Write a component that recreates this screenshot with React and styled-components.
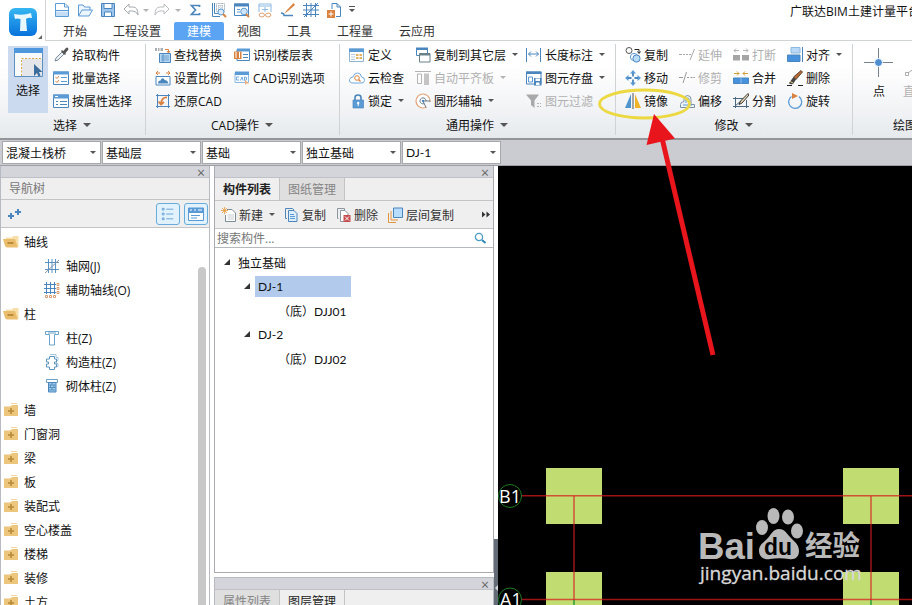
import React from 'react';
import styled, { createGlobalStyle } from 'styled-components';

const BLUE = '#4a86bd';
const SKY = '#5b9bd5';
const ORANGE = '#d9823f';
const GREY = '#b4b4b4';

// 16x16 drawings, looked up by name
const shapes = {
  doc: <><path d="M1.500 1.500h9.500L14.500 5v9.500h-13z" fill="#fff" stroke={SKY} /><path d="M10.500 1.500V5h4" fill="none" stroke={SKY} /><path d="M2 9.500h12V14H2z" fill="#c4ddf4" /><path d="M2 8.500h12" stroke={SKY} /></>,
  folder: <path d="M1.500 14V3H6l1.500 2H13v3M1.500 14L5 8h10.500L12 14z" fill="#edf5fd" stroke={SKY} />,
  save: <><path d="M1.500 1.500h13v13h-13z" fill="#9cc6ee" stroke={BLUE} /><path d="M4 1.500h8v5H4zM4.500 10h7v4.500h-7z" fill="#fff" stroke={BLUE} /></>,
  undo: <path d="M1 7l5-5v3h4q5 0 5 8-2-4-5-4H6v3z" fill="#fff" stroke="#a5a9ae" />,
  redo: <path d="M15 7l-5-5v3H6q-5 0-5 8 2-4 5-4h4v3z" fill="#fff" stroke="#b9bcc0" />,
  sigma: <path d="M12.500 5V3.500H4.500L8.500 8l-4 4.500h8V11" fill="none" stroke={BLUE} strokeWidth="1.700" />,
  gridSearch: <><path d="M5.500 1.500h8v8h-8zM8 1v9M11 1v9M5 4h9M5 7h9" fill="none" stroke="#9aa9b7" strokeDasharray="1 1" /><path d="M1.500 1v13.500H9M3.500 1v10.500H8" fill="none" stroke={BLUE} /><circle cx="10" cy="10" r="3" fill="#d8ebfb" stroke={SKY} /><path d="M12 12l3 3" stroke={ORANGE} strokeWidth="2" /></>,
  winSearch: <><path d="M.5 2h14v11.500H.5z" fill="#fff" stroke={BLUE} /><path d="M0 1.500h15v3H0z" fill={BLUE} /><path d="M3 7.500h3M3 10h3" stroke={SKY} /><circle cx="10" cy="9.500" r="3.300" fill="#cfe6fa" stroke={SKY} /><path d="M12 12l3 3" stroke={ORANGE} strokeWidth="2" /></>,
  glasses: <><path d="M2 10V2h12v8M2 4h12M5 7.500h6M8 5v5" fill="none" stroke="#8db9e2" /><ellipse cx="4.800" cy="13" rx="2.700" ry="1.900" fill="#fff" stroke="#e0a06f" /><ellipse cx="11.200" cy="13" rx="2.700" ry="1.900" fill="#fff" stroke="#e0a06f" /></>,
  pen: <><path d="M13.500 1L7 8l-3 4 4-3 7-6z" fill={ORANGE} /><path d="M1 11q3 0 3 2.500h9" fill="none" stroke={BLUE} strokeWidth="1.400" /></>,
  mesh: <path d="M3.500 1v14M8 1v14M12.500 1v14M0 3.500h16M0 8h16M0 12.500h16M1 15L15 1" fill="none" stroke={BLUE} />,
  docPlus: <><path d="M6 7V1.500h5L14.500 5v9.500H10M11 1.500V5h3.500" fill="none" stroke={BLUE} /><path d="M1 8h8v8H1z" fill={ORANGE} /><path d="M5 9.500v5M2.500 12h5" stroke="#fff" /></>,
  picker: <><path d="M2 14l1-3 6-6 2 2-6 6z" fill="#eaf2f8" stroke="#7c8a96" /><path d="M8.500 3.500l4 4" stroke="#555" strokeWidth="1.600" /><path d="M11 5.500l3-3.500" stroke="#555" strokeWidth="2.800" strokeLinecap="round" /></>,
  listCheck: <><path d="M.5 2h15v12.500H.5z" fill="#fff" stroke={BLUE} /><path d="M0 1.500h16V4.500H0z" fill={SKY} /><path d="M2.500 7l1.500 1.500L6 6M2.500 11l1.500 1.500L6 10" fill="none" stroke={ORANGE} /><path d="M8 7.500h6M8 11.500h6" stroke={SKY} /></>,
  listProp: <><path d="M.5 2h15v12.500H.5z" fill="#fff" stroke={BLUE} /><path d="M0 1.500h16V5.500H0z" fill={SKY} /><path d="M2 3.500h3" stroke="#fff" /><path d="M3 8.500h2M3 11.500h2M7 8.500h7M7 11.500h7" stroke={BLUE} /></>,
  replace: <><path d="M0 1h8v3H0z" fill="#a9aeb2" /><path d="M2.500 1v3M5 1v3" stroke="#fff" /><path d="M10 2.500h3.500V5M12 4l1.500 2L15 4" fill="none" stroke={ORANGE} /><path d="M4.500 6.500h11v9h-11z" fill="#b9d8f3" stroke={BLUE} /><path d="M6 9h8M6 11h8M6 13h8M8 7v8" stroke={BLUE} strokeWidth=".7" /></>,
  scale: <><path d="M1 3h4M3 1L1 3l2 2M15 3h-4M13 1l2 2-2 2" stroke={ORANGE} fill="none" /><path d="M1 6.500h14v8.500H1z" fill="#fff" stroke={BLUE} /><path d="M3 13.500q0-3 2.500-3 1-3 3-2 1 2 3 2 1.500 1 2 3z" fill={BLUE} /></>,
  restore: <><path d="M2.500 1v14M13.500 1v14M1 2.500h14M1 13.500h14" fill="none" stroke={BLUE} /><path d="M12 4.500Q6.500 4 6 11M3.500 8.500L6 11.500l3-2.500" fill="none" stroke={ORANGE} strokeWidth="1.800" /></>,
  floorTable: <><path d="M3 2.500h12.500v11H3z" fill="#fff" stroke={BLUE} /><path d="M3 1.500h13v3H3z" fill={SKY} /><path d="M0 4.500h7.500V12H0z" fill={ORANGE} /><path d="M2 5v6M5.500 5v6" stroke="#fff" fill="none" /><path d="M9 7.500h5M9 10.500h5" stroke={BLUE} /></>,
  cadOption: <><path d="M1 2.500h13.500v10H1z" fill="#f5faff" stroke="#8db9e2" /><path d="M1 1.500h14v3.500H1z" fill={SKY} /><path d="M5 7H2.500v3H5M6.500 10.500L8 7l1 3.500M10.500 7v3.500q3 0 2-3z" stroke={SKY} fill="none" strokeWidth=".8" /><path d="M11 10v5l1.500-1.500H15z" fill="#f0ae7c" /></>,
  define: <><path d="M.5 2h14v12.500H.5z" fill="#fff" stroke="#8fb3d3" /><path d="M0 1.500h15V5H0z" fill={SKY} /><path d="M2 7.500h4M2 10h4M2 12.500h4" stroke="#b4cbdf" /><path d="M7 7h6v5H7z" fill="#e6b160" /><path d="M7 9.500h6M10 7v5" stroke="#fff" /></>,
  cloud: <><path d="M4 13q-4 0-3.500-3.500Q1.500 7 4 7q1-4 4.500-4T12.500 7q3.500.500 3 3.500T12 13z" fill="#fff" stroke="#6caae2" /><circle cx="8" cy="8" r="2.300" fill="none" stroke={ORANGE} /><path d="M9.500 9.500l2 2" stroke={ORANGE} strokeWidth="1.300" /></>,
  lock: <><path d="M6 7V4.500Q6 2 9 2t3 2.500V7" fill="none" stroke={BLUE} strokeWidth="1.600" /><path d="M4 7h10.500v8H4z" fill={SKY} stroke={BLUE} strokeWidth=".7" /><circle cx="9.200" cy="10" r="1.200" fill="#fff" /><path d="M9.200 10v3" stroke="#fff" /></>,
  copyFloor: <><path d="M1.500 1.500h11v7h-11z" fill="#fff" stroke={BLUE} /><path d="M1 .5h12V3H1z" fill={BLUE} /><path d="M4.500 6.500H15v8.500H4.500z" fill="#fff" stroke="#68808a" /><path d="M4.500 7.500H15" stroke="#68808a" strokeWidth="2" /></>,
  alignSlab: <><path d="M0 1.500h16" stroke={GREY} /><path d="M2.500 4v9.500h4V4z" fill="none" stroke={GREY} /><path d="M9 3.500h5V15H9z" fill="#c4c4c4" /></>,
  circleAxis: <><circle cx="8" cy="8" r="7" fill="#fff" stroke="#e4a275" strokeWidth="1.200" /><path d="M9 9h7v6h-4z" fill="#f4f6f8" /><path d="M11 8a3 3 0 1 0-2 2.700M8 8h7.500M8 8l3 6.500" fill="none" stroke="#64798a" /><circle cx="8" cy="8" r="1.200" fill={BLUE} /></>,
  length: <path d="M.5 1v14M14.500 1v14M2.500 7h10M5 4.500L2.500 7 5 9.500M10 4.500L12.500 7 10 9.500" fill="none" stroke={BLUE} />,
  storage: <><path d="M.5 2h14.500v12H.5z" fill="#fff" stroke={BLUE} /><path d="M0 1.500h15.500V4H0z" fill={BLUE} /><path d="M2.500 7h4v5h-4z" fill="#fff" stroke={SKY} /><path d="M8 8h7.500v7.500H8z" fill={BLUE} /><path d="M9.500 8.500h4.500V11H9.500zM10 12.500h3.500V15H10z" fill="#fff" /></>,
  filter: <><path d="M0 1.500h13L8.500 7.500V15L5 12V7.500z" fill="#a9a9a9" /><path d="M11 10.500h4M11 13.500h4" stroke={GREY} strokeDasharray="2 1" /></>,
  copy2: <><circle cx="4" cy="3.500" r="3" fill="#fff" stroke="#555" /><path d="M9.500 2.500H14V6M12.500 4.500L14 6.500 15.500 4.500" fill="none" stroke="#222" /><circle cx="9" cy="10" r="3.600" fill="#fff" stroke={SKY} /><circle cx="11.500" cy="11.500" r="3.600" fill="#b9dcf8" stroke={BLUE} /></>,
  move: <><path d="M8 0l3 3.500H5zM8 16l3-3.500H5zM0 8l3.500-3v6zM16 8l-3.500-3v6z" fill={SKY} /><path d="M8 3v3.500M8 9.500V13M3 8h3.500M9.500 8H13" stroke={BLUE} strokeWidth="1.800" /></>,
  mirror: <><path d="M6 1v14H0z" fill="#4e94cd" /><path d="M10 1v14h6z" fill="#f0b429" /><path d="M8 0v16" stroke="#555" /></>,
  extend: <path d="M0 7.500h3M4 7.500h2M7 7.500h2M10 7.500h2M15.500 2L11 13" fill="none" stroke="#aaa" />,
  trim: <path d="M0 7.500h4M8 7.500h2M11.500 7.500h2M14.500 7.500H16M7.500 2L4 13" fill="none" stroke="#999" />,
  offset: <><path d="M1.500 14.500h14v-3H12V6.500q0-4-3.500-4T5 6.500v2q-3.500.500-3.500 3z" fill="#eef3f7" stroke="#7d93a5" /><path d="M4 12h9M7 10V6.500Q7 5 8.500 5T10 6.500V10" fill="none" stroke={SKY} /></>,
  breakUp: <><path d="M1 3.500h5M3 1.500l-2 2 2 2M15 3.500h-5M13 1.500l2 2-2 2" fill="none" stroke={GREY} /><path d="M0 8h7v5.500H0zM9 8h7v5.500H9z" fill="#a5a5a5" /></>,
  merge: <><path d="M1 3.500h5M4 1.500l2 2-2 2M15 3.500h-5M12 1.500l-2 2 2 2" fill="none" stroke="#d39b35" /><path d="M.5 8h15v5.500H.5z" fill="#4792dd" stroke={BLUE} /><path d="M8 8v5.500" stroke="#8fbdea" /></>,
  split: <><path d="M0 5.500h10M0 13.500h16M2.500 4v11M13.500 7v8M2 13L14 3" fill="none" stroke="#4a6780" /><path d="M15 .5l1 1.500-7 8-3 1.500L7.500 8z" fill="#e8d9b5" stroke="#222" strokeWidth=".9" /></>,
  align: <><path d="M4 .5h9v5.500H4z" fill="#b8d8f6" stroke="#8ab8df" /><path d="M.5 8h12.500v6.500H.5z" fill="#4792dd" stroke={BLUE} /><path d="M15.500 0v15" stroke={BLUE} /></>,
  erase: <><path d="M0 15.500h5M11 15.500h5" stroke="#222" /><path d="M14 .5L15.500 2 9 9.500 6.500 7z" fill="#b86a35" stroke="#432" strokeWidth=".8" /><path d="M6.500 7L9 9.500 6 14q-3 1-4-1z" fill="#434343" /><path d="M3 11.500l3 1.500" stroke="#f0cf81" /></>,
  rotate: <><path d="M4.500 3.500A6.500 6.500 0 1 0 12 3.600" fill="none" stroke={SKY} strokeWidth="1.300" /><path d="M5 0l6 3-6 3z" fill={ORANGE} /></>,
  newDoc: <><path d="M6 2.500h5L14.500 6v8.500h-10V8" fill="#fff" stroke="#7e8c96" /><path d="M6.500 8H13M6.500 10H13M6.500 12H13" stroke="#c8ced3" /><path d="M1 1l5 5M6 1L1 6M3.500 0v7M0 3.500h7" stroke="#e99b3b" strokeWidth=".8" /></>,
  pages: <><path d="M3 11.500H1.500v-10h7L10 3" fill="none" stroke={BLUE} /><path d="M4.500 3.500H10L13 6.500v8H4.500z" fill="#dceefb" stroke={BLUE} /><path d="M6 7.500h4M6 9.500h5M6 11.500h5" stroke={SKY} /></>,
  pagesDel: <><path d="M2.500 11.500h-1v-10h7V3" fill="none" stroke="#8b969e" /><path d="M4.500 3.500H9l3 3v8H4.500z" fill="#fff" stroke="#8b969e" /><path d="M7.500 8h7v7h-7z" fill="#c64b4b" /><path d="M9 9.500l4 4M13 9.500l-4 4" stroke="#fff" /></>,
  floorCopy: <><path d="M.5 6v9.500H8M3 4v9h7" fill="none" stroke="#e3953e" /><path d="M5.500 1h9v9.500h-9z" fill="#b8dcfb" stroke={BLUE} /></>,
  axisGrid: <><path d="M4.500 1v14M8 1v14M11.500 1v14M1 4.500h14M1 11.500h14" stroke={BLUE} strokeWidth=".9" /><path d="M1 15L15 2" stroke="#8395a5" /></>,
  axisAux: <><path d="M2.500 0v12M6.500 0v12M10.500 0v12M0 2.500h12M0 6.500h12M0 10.500h12" stroke={BLUE} /><path d="M13 1.500h2v2h-2zM13 5.500h2v2h-2zM13 9.500h2v2h-2zM1.500 13.500h2v2h-2zM5.500 13.500h2v2h-2zM9.500 13.500h2v2h-2z" fill="#fff" stroke="#d59366" strokeWidth=".9" /></>,
  column: <path d="M1.500 1.500h13v3H10.500V15H5.500V4.500h-4zM4 3h8" fill="#fff" stroke="#6ba3ca" />,
  tieColumn: <><path d="M6 .5h6v3h2v3h-1.500v3H14v3h-3" fill="none" stroke="#a3c6dd" /><path d="M5.500 2.500h5V5h2v3h-2v2h2v3h-2v2.500h-5V13h-3v-3h2V8h-2V5h3z" fill="#fff" stroke="#5b94bd" /></>,
  brickColumn: <><path d="M2.500 1.500h11v3h-11z" fill="#fff" stroke="#6ba3ca" /><path d="M4.500 4.500h7.500v9.500H4.500z" fill="#9cc9ec" stroke={BLUE} /><path d="M4.500 7h7M4.500 9.500h7M4.500 12h7M8 4.500V7M6.500 7v2.500M10 7v2.500M8 9.500V12" stroke="#4886b5" strokeWidth=".8" /></>,
  folderOpen: <><path d="M3 3.500h6L10 2h5.500v11H4z" fill="#f7dfa9" /><path d="M0 5h12l3 8.500H4.500q-2.500 0-3-3.500z" fill="#e9bd6c" /><path d="M4.500 9h6" stroke="#a8762c" strokeWidth="1.400" /></>,
  folderClosed: <><path d="M1 4.500h6L9 3h6v11H1z" fill="#ecc67c" /><path d="M8 1.500h6" stroke="#f1d79b" /><path d="M5 9h6M8 6v6" stroke="#b78835" strokeWidth="1.500" /></>,
  plusPlus: <path d="M1 10h6M4 7v6M8 6h6M11 3v6" stroke={BLUE} strokeWidth="2" />,
  viewList: <><path d="M1.500 1.500h2v2h-2zM1.500 7h2v2h-2zM1.500 12.500h2v2h-2z" fill="none" stroke={SKY} /><path d="M6 2.500h8M6 8h8M6 13.500h8" stroke={SKY} /></>,
  viewCard: <><path d="M.5 2h15v12.500H.5z" fill="#fff" stroke={SKY} /><path d="M0 2h16v5H0z" fill={SKY} /><path d="M2 4h2M6 4h2M10 4h4" stroke="#fff" /><path d="M3 9.500h9M3 12h6" stroke={SKY} /></>,
  search: <><circle cx="6" cy="7" r="3.600" fill="none" stroke="#4b9cc4" strokeWidth="1.300" /><path d="M9 10l3.500 3" stroke="#2e86b4" strokeWidth="2" /></>,
};

const Icon = ({ name, size = 16 }) => (
  <Glyph width={size} height={size} viewBox="0 0 16 16">{shapes[name]}</Glyph>
);

const quickItems = [
  ['doc', 22], ['folder', 23], ['save', 24], ['undo', 22], ['', 7], ['redo', 26], ['', 5],
  ['sigma', 30], ['gridSearch', 18], ['winSearch', 28], ['glasses', 18], ['pen', 28],
  ['mesh', 18], ['docPlus', 28], ['', 8],
];

const tabs = ['开始', '工程设置', '建模', '视图', '工具', '工程量', '云应用'];

const selectColumns = [
  { items: [{ icon: 'picker', text: '拾取构件' }, { icon: 'listCheck', text: '批量选择' }, { icon: 'listProp', text: '按属性选择' }] },
];

const cadColumns = [
  { width: 79, items: [{ icon: 'replace', text: '查找替换' }, { icon: 'scale', text: '设置比例' }, { icon: 'restore', text: '还原CAD' }] },
  { items: [{ icon: 'floorTable', text: '识别楼层表' }, { icon: 'cadOption', text: 'CAD识别选项' }] },
];

const commonColumns = [
  { width: 66, items: [{ icon: 'define', text: '定义' }, { icon: 'cloud', text: '云检查' }, { icon: 'lock', text: '锁定', caret: true }] },
  { width: 111, items: [{ icon: 'copyFloor', text: '复制到其它层', caret: true }, { icon: 'alignSlab', text: '自动平齐板', caret: true, off: true }, { icon: 'circleAxis', text: '圆形辅轴', caret: true }] },
  { items: [{ icon: 'length', text: '长度标注', caret: true }, { icon: 'storage', text: '图元存盘', caret: true }, { icon: 'filter', text: '图元过滤', off: true }] },
];

const modifyColumns = [
  { width: 54, items: [{ icon: 'copy2', text: '复制' }, { icon: 'move', text: '移动' }, { icon: 'mirror', text: '镜像' }] },
  { width: 54, items: [{ icon: 'extend', text: '延伸', off: true }, { icon: 'trim', text: '修剪', off: true }, { icon: 'offset', text: '偏移' }] },
  { width: 54, items: [{ icon: 'breakUp', text: '打断', off: true }, { icon: 'merge', text: '合并' }, { icon: 'split', text: '分割' }] },
  { items: [{ icon: 'align', text: '对齐', caret: true }, { icon: 'erase', text: '删除' }, { icon: 'rotate', text: '旋转' }] },
];

const combos = ['混凝土栈桥', '基础层', '基础', '独立基础', 'DJ-1'];

const navTree = [
  { icon: 'folderOpen', text: '轴线' },
  { icon: 'axisGrid', text: '轴网(J)', leaf: true },
  { icon: 'axisAux', text: '辅助轴线(O)', leaf: true },
  { icon: 'folderOpen', text: '柱' },
  { icon: 'column', text: '柱(Z)', leaf: true },
  { icon: 'tieColumn', text: '构造柱(Z)', leaf: true },
  { icon: 'brickColumn', text: '砌体柱(Z)', leaf: true },
  ...['墙', '门窗洞', '梁', '板', '装配式', '空心楼盖', '楼梯', '装修', '土方'].map((text) => ({ icon: 'folderClosed', text })),
];

const Columns = ({ columns }) => columns.map((col, i) => (
  <CommandColumn key={i} $width={col.width}>
    {col.items.map((item) => (
      <Command key={item.text} $off={item.off}>
        <Icon name={item.icon} />
        <span>{item.text}</span>
        {item.caret && <Caret $off={item.off} />}
      </Command>
    ))}
  </CommandColumn>
));

const Group = ({ width, pad, title, shift, children }) => (
  <RibbonGroup $width={width}>
    <GroupBody $pad={pad}>{children}</GroupBody>
    <GroupTitle $shift={shift}>{title}<Caret $big /></GroupTitle>
  </RibbonGroup>
);

const Header = () => (
  <TopBar>
    <LogoCell>
      <svg width="30" height="30" viewBox="0 0 30 30">
        <defs>
          <linearGradient id="logo" x1="0" y1="0" x2="0" y2="1">
            <stop offset="0" stopColor="#36b6f2" />
            <stop offset="1" stopColor="#0872dc" />
          </linearGradient>
        </defs>
        <rect x="1" y="1" width="28" height="28" rx="6" fill="url(#logo)" />
        <path d="M6 7q9 2 17-1l1 5q-4-1-6 1l1 12h-7l.5-12Q9 11 7 12z" fill="#e9f7ff" />
      </svg>
      <Corner />
    </LogoCell>
    <TopRight>
      <QuickBar>
        {quickItems.map(([name, width], i) => (
          <QuickItem key={i} $width={width}>
            {name ? <Icon name={name} /> : <Caret $off={i < 10} $bar={i > 10} />}
          </QuickItem>
        ))}
        <WindowTitle>广联达BIM土建计量平台</WindowTitle>
      </QuickBar>
      <TabBar>
        {tabs.map((t) => <Tab key={t} $active={t === '建模'}>{t}</Tab>)}
      </TabBar>
    </TopRight>
  </TopBar>
);

const Ribbon = () => (
  <RibbonBar>
    <Group width={146} pad={8} title="选择">
      <BigButton>
        <svg width="29" height="30" viewBox="0 0 29 30">
          <path d="M.5 2h28v26.500H.5z" fill="#f8fafc" stroke="#5c91c2" />
          <path d="M0 0h29v5H0z" fill="#4e97dc" />
          <path d="M8 28V11h20v17z" fill="#e4e6ea" />
          <path d="M7.500 28V10.500H28" fill="none" stroke="#d9a648" strokeDasharray="2 1.500" />
          <path d="M20 16v12l3-3 1.500 3.500 2-1L25 24h3.500z" fill="#3d6d9d" />
        </svg>
        选择
      </BigButton>
      <Columns columns={selectColumns} />
    </Group>
    <Group width={194} pad={9} title="CAD操作">
      <Columns columns={cadColumns} />
    </Group>
    <Group width={276} pad={9} title="通用操作">
      <Columns columns={commonColumns} />
    </Group>
    <Group width={237} pad={9} title="修改">
      <Columns columns={modifyColumns} />
    </Group>
    <Group width={120} pad={8} title="绘图" shift={0}>
      <DrawTool>
        <svg width="30" height="30" viewBox="0 0 30 30">
          <path d="M14.500 0v29M0 14.500h29" stroke="#75818b" />
          <circle cx="14.500" cy="14.500" r="4" fill="#4c8ed0" stroke="#fff" />
        </svg>
        点
      </DrawTool>
      <DrawTool $off>
        <svg width="30" height="30" viewBox="0 0 30 30">
          <path d="M8 25L25 13M5.500 24.500h3v3h-3z" fill="#fff" stroke="#aaa" />
        </svg>
        直线
      </DrawTool>
    </Group>
  </RibbonBar>
);

const NavPanel = () => (
  <NavDock>
    <DockHead>×</DockHead>
    <NavTitle>导航树</NavTitle>
    <NavTools>
      <Icon name="plusPlus" />
      <ToggleSet>
        <Toggle><Icon name="viewList" size={14} /></Toggle>
        <Toggle><Icon name="viewCard" size={16} /></Toggle>
      </ToggleSet>
    </NavTools>
    <NavBody>
      <NavList>
        {navTree.map((n) => (
          <NavRow key={n.text} $leaf={n.leaf}><Icon name={n.icon} /><span>{n.text}</span></NavRow>
        ))}
      </NavList>
      <ScrollThumb />
    </NavBody>
  </NavDock>
);

const PartsPanel = () => (
  <PartsDock>
    <PartsMain>
      <DockHead>×</DockHead>
      <PanelTabs>
        <PanelTab $active $bold>构件列表</PanelTab>
        <PanelTab>图纸管理</PanelTab>
      </PanelTabs>
      <PartsTools>
        <PartsTool $width={63}><Icon name="newDoc" /><span>新建</span><Caret /></PartsTool>
        <PartsTool $width={52}><Icon name="pages" /><span>复制</span></PartsTool>
        <PartsTool $width={52}><Icon name="pagesDel" /><span>删除</span></PartsTool>
        <PartsTool><Icon name="floorCopy" /><span>层间复制</span></PartsTool>
        <More width="9" height="7" viewBox="0 0 9 7"><path d="M0 .5l3.500 3L0 6.500zM4.500 .5l3.500 3-3.500 3z" /></More>
      </PartsTools>
      <SearchRow>搜索构件...<Icon name="search" /></SearchRow>
      <PartsTree>
        <PartRow $indent={9}><Arrow />独立基础</PartRow>
        <PartRow $indent={29}><Arrow /><Picked>DJ-1</Picked></PartRow>
        <PartRow $indent={63}>（底）DJJ01</PartRow>
        <PartRow $indent={29}><Arrow />DJ-2</PartRow>
        <PartRow $indent={63}>（底）DJJ02</PartRow>
      </PartsTree>
    </PartsMain>
    <LayerDock>
      <DockHead>×</DockHead>
      <PanelTabs>
        <PanelTab>属性列表</PanelTab>
        <PanelTab $active>图层管理</PanelTab>
      </PanelTabs>
    </LayerDock>
  </PartsDock>
);

const Drawing = () => (
  <Canvas width="414" height="439" viewBox="498 166 414 439">
    <g fill="#c1dc70">
      <rect x="546" y="468" width="56" height="56" />
      <rect x="843" y="468" width="56" height="56" />
      <rect x="546" y="572" width="56" height="56" />
      <rect x="843" y="572" width="56" height="56" />
    </g>
    <g stroke="#d51c20" strokeOpacity=".72" strokeWidth="1.500">
      <path d="M521 495.800H912M521 599.600H912" />
      <path d="M574 496V600M871 496V600" />
    </g>
    <path d="M574 600v5M871 600v5" stroke="#2f9a35" strokeWidth="1.500" />
    <g fill="none" stroke="#1d7c25">
      <circle cx="510" cy="496" r="11.500" />
      <circle cx="510" cy="599.500" r="11.500" />
    </g>
    <AxisText x="499" y="502.500">B1</AxisText>
    <AxisText x="500" y="606">A1</AxisText>
    <g fill="#b9b9b9">
      <BrandText x="698" y="558.500" textLength="57" lengthAdjust="spacingAndGlyphs">Bai</BrandText>
      <ellipse cx="762" cy="527.500" rx="6" ry="7.500" />
      <ellipse cx="773.500" cy="516" rx="6" ry="8" />
      <ellipse cx="788" cy="517" rx="6" ry="7.500" />
      <ellipse cx="797" cy="531" rx="6" ry="7.500" />
      <path d="M779 529c6 0 8 5 12 9s8 7 8 13-4 9-10 8-13-1-19 0-11-2-11-8 4-8 8-12 6-10 12-10z" />
      <ChineseBrand x="805" y="555.500" textLength="55" lengthAdjust="spacingAndGlyphs">经验</ChineseBrand>
    </g>
    <DuText x="764" y="554.500" textLength="28" lengthAdjust="spacingAndGlyphs">du</DuText>
    <UrlText x="700" y="580" textLength="162" lengthAdjust="spacingAndGlyphs">jingyan.baidu.com</UrlText>
  </Canvas>
);

function App() {
  return (
    <Window>
      <GlobalStyle />
      <Header />
      <Ribbon />
      <ComboBar>
        {combos.map((c) => <Combo key={c}>{c}<Caret /></Combo>)}
      </ComboBar>
      <Workspace>
        <NavPanel />
        <PartsPanel />
        <Splitter><SplitHandle /></Splitter>
        <Drawing />
      </Workspace>
      <Markup width="912" height="605" viewBox="0 0 912 605">
        <ellipse cx="644.500" cy="104" rx="45" ry="14" fill="none" stroke="#ecd840" strokeWidth="2.800" />
        <path d="M662 138L713 355" stroke="#e9151c" strokeWidth="5" />
        <path d="M654 114L646.500 145L675 138.500z" fill="#e9151c" />
      </Markup>
    </Window>
  );
}

export default App;

const GlobalStyle = createGlobalStyle`
  * {
    box-sizing: border-box;
  }

  body {
    margin: 0;
    overflow: hidden;
    font-family: "Open Sans", "Noto Sans CJK SC", sans-serif;
    font-size: 12px;
    color: #111;
  }
`

const Window = styled.div`
  position: relative;
  display: flex;
  flex-direction: column;
  width: 912px;
  height: 605px;
  overflow: hidden;
  background: #fff;
  white-space: nowrap;
`

const Glyph = styled.svg`
  flex: none;
  display: block;
`

const Caret = styled.i`
  flex: none;
  border: solid transparent;
  border-width: ${({ $big }) => ($big ? '4px 4px 0' : '3px 3px 0')};
  border-top-color: ${({ $off }) => ($off ? '#b4b4b4' : '#555')};
  ${({ $bar }) => $bar && 'box-shadow: 0 -2px 0 #fff, 0 -3px 0 #555;'}
`

const TopBar = styled.header`
  display: flex;
  flex: none;
  height: 41px;
`

const LogoCell = styled.div`
  display: flex;
  width: 46px;
  padding: 7px 0 0 8px;
  border-right: 1px solid #d5d5d5;
`

const Corner = styled.i`
  align-self: flex-end;
  margin-bottom: 2px;
  border: solid transparent;
  border-width: 0 0 4px 4px;
  border-bottom-color: #666;
`

const TopRight = styled.div`
  flex: 1;
  min-width: 0;
`

const QuickBar = styled.div`
  display: flex;
  align-items: center;
  height: 22px;
  padding-left: 5px;
  overflow: hidden;
`

const QuickItem = styled.div`
  display: flex;
  flex: none;
  justify-content: center;
  width: ${({ $width }) => $width}px;
  padding-bottom: 2px;
`

const WindowTitle = styled.div`
  margin-left: 434px;
`

const TabBar = styled.nav`
  display: flex;
  height: 19px;
  padding-left: 4px;
  border-bottom: 1px solid #cfd3d6;
`

const Tab = styled.div`
  height: 18px;
  padding: 0 13px;
  line-height: 20px;
  border-radius: 2px 2px 0 0;
  color: ${({ $active }) => ($active ? '#fff' : '#333')};
  background: ${({ $active }) => ($active ? '#5aa4f3' : 'none')};
`

const RibbonBar = styled.div`
  display: flex;
  flex: none;
  height: 99px;
  padding-top: 3px;
  background: linear-gradient(#fff 25%, #f5f6f8 60%, #e6eaed);
  border-bottom: 2px solid #929699;
`

const RibbonGroup = styled.section`
  flex: none;
  width: ${({ $width }) => $width}px;
  height: 91px;
  border-right: 1px solid #d0d3d6;
`

const GroupBody = styled.div`
  display: flex;
  height: 68px;
  padding-left: ${({ $pad }) => $pad}px;
`

const GroupTitle = styled.div`
  display: flex;
  align-items: center;
  justify-content: center;
  gap: 6px;
  height: 25px;
  padding-right: 1px;
  padding-left: ${({ $shift }) => $shift || 0}px;
`

const CommandColumn = styled.div`
  flex: none;
  width: ${({ $width }) => ($width ? `${$width}px` : 'auto')};
  margin-top: -1px;
`

const Command = styled.div`
  display: flex;
  align-items: center;
  height: 23px;
  color: ${({ $off }) => ($off ? '#b0b0b0' : '#111')};

  span {
    margin: 0 6px 0 3px;
  }
`

const BigButton = styled.div`
  display: flex;
  flex-direction: column;
  align-items: center;
  gap: 3px;
  width: 40px;
  height: 67px;
  margin: 2px 5px 0 0;
  padding-top: 2px;
  background: #ccdaef;
`

const DrawTool = styled.div`
  display: flex;
  flex: none;
  flex-direction: column;
  align-items: center;
  gap: 4px;
  width: 36px;
  padding-top: 4px;
  color: ${({ $off }) => ($off ? '#b0b0b0' : '#111')};
`

const ComboBar = styled.div`
  display: flex;
  flex: none;
  gap: 1px;
  height: 26px;
  padding: 1px 0 1px 2px;
  background: #caccd2;
  border-bottom: 1px solid #9d9fa4;
`

const Combo = styled.div`
  display: flex;
  align-items: center;
  justify-content: space-between;
  width: 99px;
  padding: 0 4px 0 3px;
  background: #fff;
  border: 1px solid #a6a8ac;
  font-family: Lato, "Noto Sans CJK SC", sans-serif;
`

const Workspace = styled.main`
  display: flex;
  height: 439px;
`

const NavDock = styled.aside`
  display: flex;
  flex-direction: column;
  width: 210px;
  border: solid #b7bac0;
  border-width: 0 1px;
`

const DockHead = styled.div`
  flex: none;
  height: 12px;
  padding-right: 4px;
  background: #d4d5db;
  border-bottom: 1px solid #bfc1c6;
  color: #666;
  font-size: 14px;
  line-height: 13px;
  text-align: right;
`

const NavTitle = styled.div`
  flex: none;
  height: 22px;
  padding-left: 8px;
  background: #efefef;
  border-bottom: 1px solid #c4c4c4;
  color: #777;
  line-height: 21px;
`

const NavTools = styled.div`
  display: flex;
  flex: none;
  align-items: center;
  justify-content: space-between;
  height: 28px;
  padding: 0 1px 0 6px;
  background: #efefef;
  border-bottom: 1px solid #c4c4c4;
`

const ToggleSet = styled.div`
  display: flex;
  gap: 4px;
`

const Toggle = styled.div`
  display: flex;
  align-items: center;
  justify-content: center;
  width: 24px;
  height: 22px;
  background: #e1f2fd;
  border: 1px solid #68acdc;
  border-radius: 3px;
`

const NavBody = styled.div`
  display: flex;
  flex: 1;
  min-height: 0;
  overflow: hidden;
`

const NavList = styled.div`
  flex: 1;
  padding-top: 2px;
`

const NavRow = styled.div`
  display: flex;
  align-items: center;
  gap: ${({ $leaf }) => ($leaf ? 6 : 5)}px;
  height: 24px;
  padding-left: ${({ $leaf }) => ($leaf ? 43 : 2)}px;
`

const ScrollThumb = styled.div`
  width: 8px;
  margin: 39px 3px 0 0;
  background: #c8c8c8;
  border-radius: 4px 4px 0 0;
`

const PartsDock = styled.aside`
  display: flex;
  flex-direction: column;
  gap: 4px;
  width: 280px;
  margin-left: 4px;
`

const PartsMain = styled.div`
  display: flex;
  flex: none;
  flex-direction: column;
  height: 407px;
  border: 1px solid #a9abb0;
  border-top: 0;
`

const LayerDock = styled.div`
  flex: none;
  height: 50px;
  border: 1px solid #b7bac0;
  border-bottom: 0;
`

const PanelTabs = styled.div`
  display: flex;
  flex: none;
  height: 23px;
  background: #efefef;
  border-bottom: 1px solid #c4c4c4;
`

const PanelTab = styled.div`
  width: 65px;
  text-align: center;
  line-height: 23px;
  border-right: 1px solid #c4c4c4;
  color: ${({ $active }) => ($active ? '#222' : '#858585')};
  background: ${({ $active }) => ($active ? '#efefef' : '#dfdfdf')};
  font-weight: ${({ $bold }) => ($bold ? 600 : 400)};
`

const PartsTools = styled.div`
  display: flex;
  flex: none;
  align-items: center;
  height: 28px;
  padding-left: 6px;
  background: #efefef;
  border-bottom: 1px solid #c4c4c4;
`

const PartsTool = styled.div`
  display: flex;
  align-items: center;
  width: ${({ $width }) => ($width ? `${$width}px` : 'auto')};
  color: #333;

  span {
    margin: 0 6px 0 2px;
  }
`

const More = styled.svg`
  margin: 0 2px 0 auto;
  fill: #333;
`

const SearchRow = styled.div`
  display: flex;
  flex: none;
  align-items: center;
  justify-content: space-between;
  height: 19px;
  padding: 0 4px 0 2px;
  border-bottom: 1px solid #b5b8bc;
  color: #777;
`

const PartsTree = styled.div`
  padding-top: 2px;
  font-family: Lato, "Noto Sans CJK SC", sans-serif;
`

const PartRow = styled.div`
  display: flex;
  align-items: center;
  height: 24px;
  padding-left: ${({ $indent }) => $indent}px;
`

const Arrow = styled.i`
  margin-right: 8px;
  border: solid transparent;
  border-width: 0 0 6px 6px;
  border-bottom-color: #333;
`

const Picked = styled.span`
  width: 96px;
  height: 21px;
  margin-left: -3px;
  padding-left: 3px;
  line-height: 21px;
  background: #b2cbed;
`

const Splitter = styled.div`
  display: flex;
  flex-direction: column;
  justify-content: flex-end;
  width: 4px;
`

const SplitHandle = styled.div`
  height: 66px;
  padding-top: 46px;
  background: #646d77;

  &::before {
    content: '';
    display: block;
    border: solid transparent;
    border-width: 3px 3px 3px 0;
    border-right-color: #d5d9dd;
  }
`

const Canvas = styled.svg`
  flex: none;
  background: #000;
`

const AxisText = styled.text`
  font-family: "Open Sans", sans-serif;
  font-size: 18px;
  fill: #fff;
`

const BrandText = styled.text`
  font-family: "Liberation Sans", sans-serif;
  font-size: 37px;
  font-weight: 700;
`

const ChineseBrand = styled.text`
  font-family: "Noto Sans CJK SC", sans-serif;
  font-size: 28px;
  font-weight: 700;
`

const DuText = styled.text`
  font-family: "Liberation Sans", sans-serif;
  font-size: 24px;
  font-weight: 700;
  fill: #000;
`

const UrlText = styled.text`
  font-family: "Open Sans", sans-serif;
  font-size: 18px;
  fill: #d8d8d8;
  stroke: #d8d8d8;
  stroke-width: 0.3px;
`

const Markup = styled.svg`
  position: absolute;
  top: 0;
  left: 0;
  pointer-events: none;
`
